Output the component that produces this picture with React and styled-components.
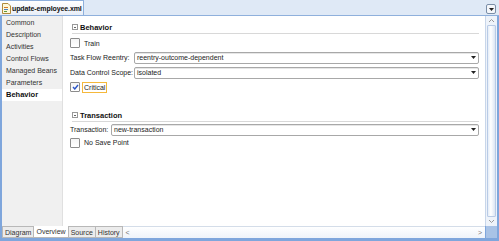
import styled, { createGlobalStyle } from "styled-components";

const Global = createGlobalStyle`
  html, body { margin: 0; padding: 0; background: #fff; }
  body { font-family: "Liberation Sans", Arial, sans-serif; }
  svg { flex: none; }
`;

const Frame = styled.div`
  width: 499px;
  height: 241px;
  display: flex;
  flex-direction: column;
  overflow: hidden;
  font-family: "Liberation Sans", Arial, sans-serif;
  font-size: 7px;
  color: #222;
`;

const TabBar = styled.div`
  height: 16px;
  flex: none;
  display: flex;
  align-items: stretch;
  background: #dfe9f6;
  border-bottom: 1px solid #8fb0dc;
  box-sizing: border-box;
`;

const EditorTab = styled.div`
  display: flex;
  align-items: center;
  gap: 1px;
  padding: 0 1px 0 2px;
  width: 84px;
  box-sizing: border-box;
  background: linear-gradient(#ffffff, #e8eef7);
  border-right: 1px solid #8fb0dc;
  border-top: 1px solid #8fb0dc;
  font-weight: bold;
  font-size: 7px;
  letter-spacing: -0.1px;
  color: #111;
  white-space: nowrap;
  overflow: hidden;
`;

const Spacer = styled.div`
  flex: 1;
`;

const MenuButton = styled.div`
  width: 8px;
  height: 8px;
  margin: 4px 3px 0 0;
  border: 1px solid #7a8ea8;
  border-radius: 2px;
  background: #f4f6fa;
  display: flex;
  align-items: center;
  justify-content: center;
`;

const Body = styled.div`
  flex: 1;
  display: flex;
  border-left: 2px solid #7fa6dc;
  border-right: 2px solid #7fa6dc;
  min-height: 0;
`;

const Sidebar = styled.div`
  width: 60px;
  flex: none;
  background: #f0f0f0;
  border-right: 1px solid #e0e0e0;
  padding-top: 1px;
  display: flex;
  flex-direction: column;
`;

const NavItem = styled.div`
  height: 12px;
  line-height: 12px;
  padding-left: 4px;
  white-space: nowrap;
  background: ${(p) => (p.$active ? "#ffffff" : "transparent")};
  font-weight: ${(p) => (p.$active ? "bold" : "normal")};
  font-size: ${(p) => (p.$active ? "7.5px" : "7px")};
  color: ${(p) => (p.$active ? "#111" : "#333")};
`;

const Content = styled.div`
  flex: 1;
  background: #fff;
  padding: 0 6px 0 7px;
  display: flex;
  flex-direction: column;
`;

const SectionHead = styled.div`
  display: flex;
  align-items: center;
  gap: 2px;
  height: 12px;
  border-bottom: 1px solid #d8d8d8;
  margin-top: ${(p) => p.$top}px;
  margin-left: 2px;
  margin-bottom: ${(p) => p.$bottom}px;
  font-weight: bold;
  font-size: 7.5px;
  color: #111;
`;

const Toggle = styled.span`
  width: 6px;
  height: 6px;
  border: 1px solid #999;
  box-sizing: border-box;
  position: relative;
  &::after {
    content: "";
    position: absolute;
    left: 1px;
    right: 1px;
    top: 2px;
    height: 1px;
    background: #666;
  }
`;

const CheckRow = styled.div`
  display: flex;
  align-items: center;
  gap: 2px;
  height: ${(p) => p.$h || 14}px;
`;

const Box = styled.span`
  width: 8px;
  height: 8px;
  border: 1px solid #8c8c8c;
  border-radius: 1px;
  background: linear-gradient(#f4f4f4, #fff);
  display: flex;
  align-items: center;
  justify-content: center;
`;

const CheckLabel = styled.span`
  padding: 0 1px;
  border: 1px solid ${(p) => (p.$focus ? "#f5b83b" : "transparent")};
  line-height: 9px;
`;

const FieldRow = styled.div`
  display: flex;
  align-items: center;
  height: 15px;
`;

const FieldLabel = styled.div`
  width: ${(p) => p.$w}px;
  flex: none;
  white-space: nowrap;
`;

const Select = styled.div`
  flex: 1;
  height: 12px;
  box-sizing: border-box;
  border: 1px solid #a8a8a8;
  border-radius: 2px;
  display: flex;
  align-items: center;
  justify-content: space-between;
  padding: 0 2px;
  background: #fff;
  box-shadow: inset 0 1px 0 #e6e6e6;
`;

const VScroll = styled.div`
  width: 11px;
  flex: none;
  background: #eef3fa;
  border-left: 1px solid #c8d6ea;
  display: flex;
  flex-direction: column;
  align-items: stretch;
`;

const Arrow = styled.div`
  height: 9px;
  display: flex;
  align-items: center;
  justify-content: center;
`;

const Thumb = styled.div`
  flex: 1;
  margin: 0 1px;
  background: linear-gradient(90deg, #e4ecf7, #ffffff 40%, #dce6f4);
  border: 1px solid #b9cbe6;
  border-radius: 1px;
`;

const Footer = styled.div`
  height: 12px;
  flex: none;
  display: flex;
  border-left: 2px solid #7fa6dc;
  border-right: 2px solid #7fa6dc;
  background: #f0f0f0;
`;

const BottomTab = styled.div`
  padding: 0 2px;
  line-height: 11px;
  border: 1px solid #b8b8b8;
  border-top: ${(p) => (p.$active ? "none" : "1px solid #b8b8b8")};
  background: ${(p) => (p.$active ? "#ffffff" : "#ececec")};
  margin-left: ${(p) => (p.$first ? 0 : -1)}px;
  color: #333;
  white-space: nowrap;
`;

const HScroll = styled.div`
  flex: 1;
  display: flex;
  align-items: center;
  justify-content: space-between;
  padding: 0 3px;
  background: linear-gradient(#ffffff, #eef3fa);
  border-top: 1px solid #d4dde9;
  color: #777;
  font-size: 7px;
`;

const Corner = styled.div`
  width: 11px;
  flex: none;
  background: #a9c3e6;
  border-left: 1px solid #7fa6dc;
`;

const BottomEdge = styled.div`
  height: 3px;
  flex: none;
  background: #7fa6dc;
`;

const FileIcon = () => (
  <svg width="9" height="11" viewBox="0 0 9 11">
    <path d="M0.5 0.5h5.5l2.5 2.5v7.5h-8z" fill="#fff8d8" stroke="#b08a3c" />
    <rect x="2" y="4" width="4" height="1" fill="#d27a2a" />
    <rect x="2" y="6" width="4" height="1" fill="#4a7fc0" />
    <rect x="2" y="8" width="3" height="1" fill="#5a9a40" />
  </svg>
);

const Caret = () => (
  <svg width="5" height="3" viewBox="0 0 5 3">
    <path d="M0 0h5L2.5 3z" fill="#222" />
  </svg>
);

const Tick = () => (
  <svg width="7" height="6" viewBox="0 0 7 6">
    <path d="M1 3l1.8 2L6 1" fill="none" stroke="#2b55c8" strokeWidth="1.4" />
  </svg>
);

const navItems = [
  "Common",
  "Description",
  "Activities",
  "Control Flows",
  "Managed Beans",
  "Parameters",
  "Behavior",
];

export default function App() {
  return (
    <>
      <Global />
      <Frame>
        <TabBar>
          <EditorTab>
            <FileIcon />
            update-employee.xml
          </EditorTab>
          <Spacer />
          <MenuButton>
            <Caret />
          </MenuButton>
        </TabBar>
        <Body>
          <Sidebar>
            {navItems.map((n) => (
              <NavItem key={n} $active={n === "Behavior"}>
                {n}
              </NavItem>
            ))}
          </Sidebar>
          <Content>
            <SectionHead $top={5} $bottom={2}>
              <Toggle />
              Behavior
            </SectionHead>
            <CheckRow>
              <Box />
              <CheckLabel>Train</CheckLabel>
            </CheckRow>
            <FieldRow>
              <FieldLabel $w={64}>Task Flow Reentry:</FieldLabel>
              <Select>
                reentry-outcome-dependent
                <Caret />
              </Select>
            </FieldRow>
            <FieldRow>
              <FieldLabel $w={64}>Data Control Scope:</FieldLabel>
              <Select>
                isolated
                <Caret />
              </Select>
            </FieldRow>
            <CheckRow>
              <Box>
                <Tick />
              </Box>
              <CheckLabel $focus>Critical</CheckLabel>
            </CheckRow>
            <SectionHead $top={15} $bottom={0}>
              <Toggle />
              Transaction
            </SectionHead>
            <FieldRow>
              <FieldLabel $w={41}>Transaction:</FieldLabel>
              <Select>
                new-transaction
                <Caret />
              </Select>
            </FieldRow>
            <CheckRow $h={11}>
              <Box />
              <CheckLabel>No Save Point</CheckLabel>
            </CheckRow>
          </Content>
          <VScroll>
            <Arrow>
              <svg width="5" height="3" viewBox="0 0 5 3">
                <path d="M0 3L2.5 0.5L5 3" fill="none" stroke="#999" />
              </svg>
            </Arrow>
            <Thumb />
            <Arrow>
              <svg width="5" height="3" viewBox="0 0 5 3">
                <path d="M0 0L2.5 2.5L5 0" fill="none" stroke="#999" />
              </svg>
            </Arrow>
          </VScroll>
        </Body>
        <Footer>
          <BottomTab $first>Diagram</BottomTab>
          <BottomTab $active>Overview</BottomTab>
          <BottomTab>Source</BottomTab>
          <BottomTab>History</BottomTab>
          <HScroll>
            <span>&lt;</span>
            <span>&gt;</span>
          </HScroll>
          <Corner />
        </Footer>
        <BottomEdge />
      </Frame>
    </>
  );
}
